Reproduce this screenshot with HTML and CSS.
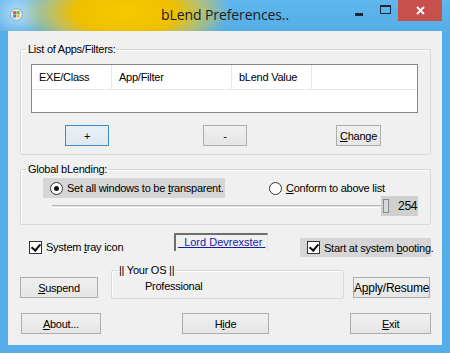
FILE: index.html
```html
<!DOCTYPE html>
<html lang="en">
<head>
    <meta charset="UTF-8">
    <title>bLend Preferences..</title>
    <link rel="stylesheet" href="styles.css">
</head>
<body>
    <div class="window">
        <header class="titlebar">
            <svg class="app-icon" width="13" height="13" viewBox="0 0 13 13">
                <circle cx="6.5" cy="6.5" r="6" fill="#dfe9f2" stroke="#8aa5bd" stroke-width="1"/>
                <rect x="3.2" y="3.2" width="2.9" height="2.9" fill="#e8502a"/>
                <rect x="6.6" y="3.2" width="2.9" height="2.9" fill="#6bb42c"/>
                <rect x="3.2" y="6.6" width="2.9" height="2.9" fill="#2a8ee0"/>
                <rect x="6.6" y="6.6" width="2.9" height="2.9" fill="#f6be19"/>
            </svg>
            <span class="title">bLend Preferences..</span>
            <div class="caption">
                <span class="cap cap-min"><i></i></span>
                <span class="cap cap-max"><i></i></span>
                <span class="cap cap-close">
                    <svg width="9" height="9" viewBox="0 0 9 9"><path d="M1 1 L8 8 M8 1 L1 8" stroke="#fff" stroke-width="1.8"/></svg>
                </span>
            </div>
        </header>

        <main class="client">
            <fieldset class="group group-apps">
                <legend>List of Apps/Filters:</legend>
                <div class="listview">
                    <div class="lv-header">
                        <span class="col col-exe">EXE/Class</span>
                        <span class="col col-app">App/Filter</span>
                        <span class="col col-val">bLend Value</span>
                    </div>
                </div>
                <div class="list-buttons">
                    <button class="btn btn-add focused">+</button>
                    <button class="btn btn-remove">-</button>
                    <button class="btn btn-change"><u>C</u>hange</button>
                </div>
            </fieldset>

            <fieldset class="group group-global">
                <legend>Global bLending:</legend>
                <div class="radio-row">
                    <label class="radio checked highlight"><span class="dot"></span><span>Set all windows to be <u>t</u>ransparent.</span></label>
                    <label class="radio radio-conform"><span class="dot"></span><span><u>C</u>onform to above list</span></label>
                </div>
                <div class="slider-row">
                    <div class="track"></div>
                    <div class="value-box"><span class="thumb"></span><span>254</span></div>
                </div>
            </fieldset>

            <div class="options-row">
                <label class="check check-tray"><span class="box"></span><span>System <u>t</u>ray icon</span></label>
                <a class="author">&nbsp;&nbsp;Lord Devrexster&nbsp;</a>
                <label class="check check-boot highlight"><span class="box"></span><span>Start at system <u>b</u>ooting.</span></label>
            </div>

            <div class="os-row">
                <button class="btn btn-suspend"><u>S</u>uspend</button>
                <fieldset class="group group-os">
                    <legend>|| Your OS ||</legend>
                    <div class="os-name">Professional</div>
                </fieldset>
                <button class="btn btn-apply">A<u>p</u>ply/Resume</button>
            </div>

            <div class="bottom-row">
                <button class="btn btn-about"><u>A</u>bout...</button>
                <button class="btn btn-hide">H<u>i</u>de</button>
                <button class="btn btn-exit"><u>E</u>xit</button>
            </div>
        </main>
    </div>
</body>
</html>
```

FILE: styles.css
```css
:root {
    --frame: #56ade7;
    --face: #f0f0f0;
    --group-line: #d6d9dc;
    --btn-border: #adadad;
    --hilite: #d6d6d6;
}
* {
    box-sizing: border-box;
}
body {
    margin: 0;
    font-family: "Liberation Sans", Arial, sans-serif;
    font-size: 11px;
    color: #000;
}
u {
    text-decoration: underline;
    text-underline-offset: 1px;
}
.window {
    width: 450px;
    height: 353px;
    background: var(--frame);
    display: flex;
    flex-direction: column;
    overflow: hidden;
}

/* title bar */
.titlebar {
    height: 31px;
    flex: none;
    display: grid;
    grid-template-columns: 1fr auto 1fr;
    align-items: start;
    background:
        radial-gradient(ellipse 105px 46px at 125px 12px, #f6c900 0%, #efbf00 48%, rgba(222, 198, 60, 0.65) 74%, rgba(86, 173, 231, 0) 100%),
        radial-gradient(ellipse 30px 26px at 18px 14px, rgba(255, 255, 255, 0.55) 0%, rgba(255, 255, 255, 0) 100%),
        linear-gradient(#60b7ee, #55ade7);
}
.app-icon {
    margin: 8px 0 0 10px;
}
.title {
    font-family: "Open Sans", "Liberation Sans", sans-serif;
    font-size: 14px;
    color: #1b1b1b;
    padding-top: 5px;
    letter-spacing: -0.1px;
}
.caption {
    justify-self: end;
    display: flex;
    margin-right: 8px;
}
.cap {
    height: 21px;
    display: flex;
    align-items: center;
    justify-content: center;
}
.cap-min {
    width: 27px;
}
.cap-min i {
    width: 8px;
    height: 3px;
    background: #1c2a38;
    margin-top: 7px;
}
.cap-max {
    width: 26px;
}
.cap-max i {
    width: 11px;
    height: 9px;
    border: 1px solid #1c2a38;
    border-top-width: 2px;
    margin-top: -2px;
}
.cap-close {
    width: 44px;
    background: #c7504c;
}

/* client area */
.client {
    flex: none;
    height: 314px;
    margin: 0 8px;
    background: var(--face);
    padding: 12px 11px 0 12px;
    letter-spacing: -0.25px;
}
.group {
    margin: 0;
    border: 1px solid var(--group-line);
    border-radius: 2px;
    box-shadow: inset 1px 1px 0 #fff;
    padding: 0 7px;
}
.group legend {
    padding: 0 1px;
    margin-left: -1px;
    line-height: 13px;
}
.group-apps {
    width: 411px;
    padding-bottom: 8px;
}
.listview {
    margin: 8px 0 0 3px;
    width: 387px;
    height: 49px;
    background: #fff;
    border: 1px solid #828790;
}
.lv-header {
    display: flex;
    height: 25px;
    border-bottom: 1px solid #e8e8e8;
}
.col {
    border-right: 1px solid #e5e5e5;
    padding: 6px 0 0 7px;
}
.col-exe {
    width: 80px;
}
.col-app {
    width: 120px;
}
.col-val {
    width: 80px;
}
.list-buttons {
    display: flex;
    margin-top: 12px;
}
.btn {
    font-family: inherit;
    font-size: 11px;
    letter-spacing: inherit;
    height: 21px;
    padding: 0;
    color: #000;
    border: 1px solid var(--btn-border);
    background: linear-gradient(#f0f0f0, #e5e5e5);
    border-radius: 0;
    white-space: nowrap;
}
.btn.focused {
    border-color: #3c8ad0;
    background: linear-gradient(#e9eff5, #e0e8f0);
}
.btn-add {
    width: 44px;
    margin-left: 37px;
}
.btn-remove {
    width: 44px;
    margin-left: 94px;
}
.btn-change {
    width: 45px;
    margin-left: 89px;
}

/* global blending */
.group-global {
    width: 411px;
    margin-top: 8px;
    padding-bottom: 8px;
}
.radio-row {
    display: flex;
    margin-top: 2px;
}
.radio,
.check {
    display: flex;
    align-items: center;
    white-space: nowrap;
}
.radio .dot {
    flex: none;
    width: 13px;
    height: 13px;
    border-radius: 50%;
    border: 1px solid #333;
    background: #fff;
    margin-right: 4px;
    display: flex;
    align-items: center;
    justify-content: center;
}
.radio.checked .dot::after {
    content: "";
    width: 5px;
    height: 5px;
    border-radius: 50%;
    background: #111;
}
.highlight {
    background: var(--hilite);
}
.radio-row .highlight {
    margin-left: 15px;
    width: 182px;
    height: 20px;
    padding-left: 7px;
}
.radio-conform {
    margin-left: 44px;
}
.slider-row {
    display: flex;
    align-items: center;
    margin-top: -2px;
}
.track {
    margin-left: 24px;
    width: 331px;
    height: 3px;
    border-top: 1px solid #b8b8b8;
    border-bottom: 1px solid #fff;
    background: #e2e2e2;
}
.value-box {
    width: 37px;
    height: 20px;
    margin-left: -2px;
    background: #cfcfcf;
    display: flex;
    align-items: center;
    gap: 9px;
    padding-left: 2px;
    font-size: 12px;
}
.thumb {
    flex: none;
    width: 6px;
    height: 14px;
    border: 1px solid #8a8a8a;
    background: #d9d9d9;
}

/* options */
.options-row {
    display: flex;
    align-items: flex-start;
    margin-top: 8px;
}
.check .box {
    flex: none;
    width: 13px;
    height: 13px;
    border: 1px solid #333;
    background: #fff;
    margin-right: 4px;
    position: relative;
}
.check .box::after {
    content: "";
    position: absolute;
    left: 3px;
    top: 0;
    width: 4px;
    height: 7px;
    border: solid #111;
    border-width: 0 2px 2px 0;
    transform: rotate(40deg);
}
.check-tray {
    margin: 7px 0 0 9px;
    width: 110px;
    height: 14px;
}
.author {
    margin-left: 36px;
    width: 94px;
    height: 18px;
    border-top: 2px solid #6e6e6e;
    border-left: 2px solid #6e6e6e;
    border-right: 1px solid #e4e4e4;
    color: #1a1aa8;
    text-decoration: underline;
    text-align: center;
    line-height: 14px;
    white-space: nowrap;
    letter-spacing: 0;
}
.check-boot {
    margin: 5px 0 0 32px;
    width: 131px;
    height: 19px;
    padding-left: 7px;
}

/* os row */
.os-row {
    display: flex;
    align-items: flex-start;
    margin-top: 7px;
}
.btn-suspend {
    width: 78px;
    margin-top: 13px;
}
.group-os {
    width: 233px;
    height: 35px;
    margin-left: 13px;
    padding: 0 7px;
}
.os-name {
    padding: 3px 0 0 26px;
}
.btn-apply {
    width: 77px;
    margin: 13px 0 0 9px;
    font-size: 12px;
}

/* bottom */
.bottom-row {
    display: flex;
    margin-top: 14px;
}
.btn-about {
    width: 80px;
    margin-left: 1px;
}
.btn-hide {
    width: 88px;
    margin-left: 81px;
}
.btn-exit {
    width: 81px;
    margin-left: 81px;
}
```
